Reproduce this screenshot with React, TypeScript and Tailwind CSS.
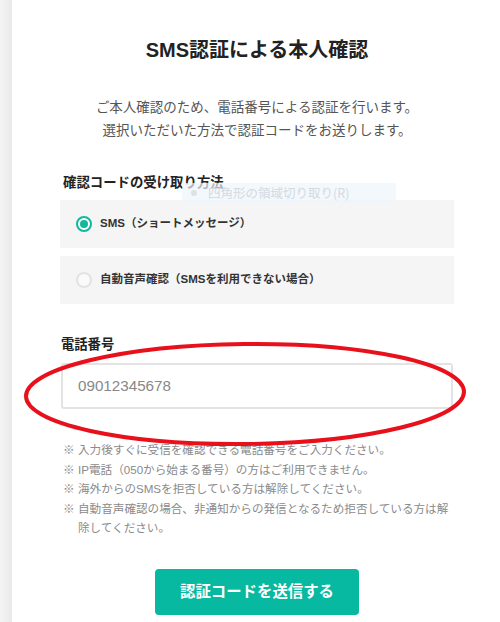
const font = "font-['Liberation_Sans','Noto_Sans_CJK_JP',sans-serif]";

type RadioRowProps = {
  label: string;
  checked?: boolean;
};

function RadioRow({ label, checked = false }: RadioRowProps) {
  return (
    <div className="flex h-[48px] items-center bg-[#f5f5f5] pl-[16px]">
      {checked ? (
        <span className="flex h-[16px] w-[16px] items-center justify-center rounded-full border-2 border-[#10b89c] bg-white">
          <span className="h-[8px] w-[8px] rounded-full bg-[#10b89c]" />
        </span>
      ) : (
        <span className="h-[16px] w-[16px] rounded-full border-2 border-[#e2e2e2] bg-[#fafafa]" />
      )}
      <span className="ml-[8px] text-[11.5px] font-bold text-[#333]">{label}</span>
    </div>
  );
}

const notes = [
  "入力後すぐに受信を確認できる電話番号をご入力ください。",
  "IP電話（050から始まる番号）の方はご利用できません。",
  "海外からのSMSを拒否している方は解除してください。",
];

export default function App() {
  return (
    <div className={`relative flex h-[622px] w-[500px] overflow-hidden bg-white ${font}`}>
      {/* grey edge of the window behind */}
      <div className="w-[12px] shrink-0 bg-gradient-to-r from-[#f4f4f4] to-[#e9e9e9]" />

      <div className="flex flex-1 flex-col pl-[48px] pr-[46px] pt-[36px]">
        <h1 className="text-center text-[20px] font-bold leading-[28px] text-[#222]">
          SMS認証による本人確認
        </h1>

        <p className="mt-[32px] text-center text-[13.5px] leading-[23px] text-[#555]">
          ご本人確認のため、電話番号による認証を行います。
          <br />
          選択いただいた方法で認証コードをお送りします。
        </p>

        <div className="mt-[31px] pl-[3px] text-[13.4px] font-bold leading-[20px] text-[#222]">
          確認コードの受け取り方法
        </div>

        <div className="mt-[7px] flex flex-col gap-[8px]">
          <RadioRow label="SMS（ショートメッセージ）" checked />
          <RadioRow label="自動音声確認（SMSを利用できない場合）" />
        </div>

        <div className="mt-[31px] pl-[1px] text-[13.3px] font-bold leading-[20px] text-[#222]">
          電話番号
        </div>

        <div className="mt-[8px] ml-[1px] mr-[1px] flex h-[46px] items-center rounded-[3px] border-2 border-[#e3e3e3] bg-white pl-[15px] text-[15.2px] text-[#888]">
          09012345678
        </div>

        <ul className="mt-[31px] text-[11.6px] leading-[19.5px] text-[#8a8a8a]">
          {notes.map((n) => (
            <li key={n} className="flex pl-[3px]">
              <span className="w-[15px] shrink-0">※</span>
              <span>{n}</span>
            </li>
          ))}
          <li className="flex pl-[3px]">
            <span className="w-[15px] shrink-0">※</span>
            <span>
              自動音声確認の場合、非通知からの発信となるため拒否している方は解
              <br />
              除してください。
            </span>
          </li>
        </ul>

        <div className="mt-[31px] flex justify-center">
          <button className="flex h-[46px] w-[204px] items-center justify-center rounded-[4px] bg-[#06b9a0] text-[15.4px] font-bold text-white">
            認証コードを送信する
          </button>
        </div>
      </div>

      {/* faded context-menu tooltip caught in the capture */}
      <div className="pointer-events-none absolute left-[182px] top-[183px] flex h-[20px] w-[214px] items-center bg-[#eef5fc]/70 pl-[9px] text-[12.5px] text-[#d3dae1] font-['Noto_Sans_CJK_JP',sans-serif]">
        <span className="h-[6px] w-[6px] rounded-full bg-[#dde1e5]" />
        <span className="ml-[11px]">四角形の領域切り取り(R)</span>
      </div>

      {/* red annotation circle */}
      <svg
        className="pointer-events-none absolute left-0 top-0"
        width="500"
        height="622"
        viewBox="0 0 500 622"
        fill="none"
      >
        <ellipse cx="245" cy="394" rx="219" ry="50" stroke="#e8101b" strokeWidth="4" transform="rotate(-0.6 245 394)" />
      </svg>
    </div>
  );
}
